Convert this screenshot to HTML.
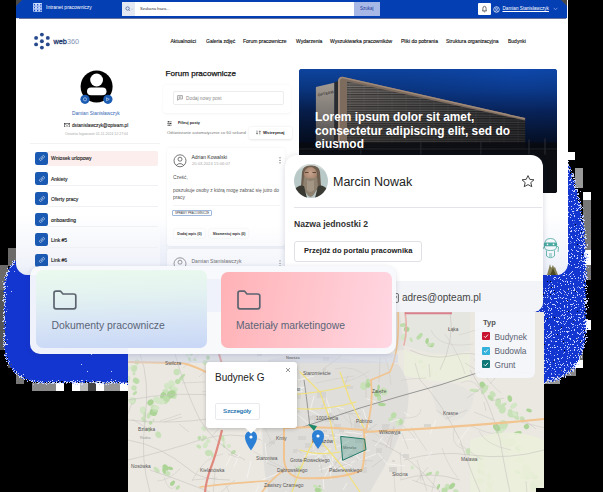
<!DOCTYPE html>
<html><head><meta charset="utf-8">
<style>
*{margin:0;padding:0;box-sizing:border-box}
html,body{width:603px;height:492px;overflow:hidden;background:#000;font-family:"Liberation Sans",sans-serif}
.a{position:absolute}
.t{position:absolute;white-space:nowrap;line-height:1}
</style></head><body>
<div class="a" style="left:0;top:0;width:603px;height:492px;overflow:hidden">

<!-- blue shadow -->
<svg class="a" style="left:0;top:0" width="603" height="492" viewBox="0 0 603 492">
  <defs>
    <filter id="dith" x="0" y="0" width="603" height="492" filterUnits="userSpaceOnUse" color-interpolation-filters="sRGB">
      <feGaussianBlur in="SourceAlpha" stdDeviation="2.8" result="bl"/>
      <feTurbulence type="fractalNoise" baseFrequency="1.3" numOctaves="1" seed="3" result="nz"/>
      <feColorMatrix in="nz" type="matrix" values="0 0 0 0 0  0 0 0 0 0  0 0 0 0 0  1.25 0 0 0 -0.15" result="na"/>
      <feComposite in="bl" in2="na" operator="arithmetic" k1="0" k2="40" k3="-40" k4="0" result="th"/>
      <feFlood flood-color="#1a3ed6" result="fl"/>
      <feComposite in="fl" in2="th" operator="in" result="blue"/>
      <feComposite in="bl" in2="na" operator="arithmetic" k1="0" k2="40" k3="-40" k4="-6" result="th2"/>
      <feFlood flood-color="#c8d4ff" result="wh"/>
      <feComposite in="wh" in2="th" operator="in" result="white"/>
      <feFlood flood-color="#1436d0"/>
      <feComposite in2="th2" operator="in" result="core"/>
      <feMerge><feMergeNode in="white"/><feMergeNode in="core"/></feMerge>
    </filter>
  </defs>
  <g fill="#6b6a68">
    <rect x="8" y="248" width="8" height="18"/><rect x="0" y="265" width="8" height="25"/>
    <rect x="0" y="290" width="5" height="60" fill="#555"/>
    <rect x="8" y="360" width="8" height="8" fill="#555"/><rect x="16" y="368" width="8" height="16" fill="#777"/>
    <rect x="32" y="383" width="24" height="8" fill="#8a8a8a"/><rect x="56" y="383" width="8" height="8" fill="#fff"/>
    <rect x="72" y="383" width="8" height="8" fill="#fff"/><rect x="80" y="383" width="8" height="8" fill="#bbb"/>
    <rect x="88" y="383" width="8" height="8" fill="#444"/><rect x="96" y="383" width="8" height="8" fill="#fff"/>
    <rect x="104" y="383" width="16" height="8" fill="#999"/><rect x="120" y="383" width="8" height="8" fill="#fff"/>
    <rect x="567" y="152" width="8" height="8" fill="#fff"/><rect x="575" y="168" width="8" height="20" fill="#9a9a9a"/>
    <rect x="583" y="192" width="8" height="8" fill="#fff"/><rect x="583" y="200" width="8" height="80" fill="#777"/>
    <rect x="583" y="250" width="8" height="15" fill="#fff"/><rect x="583" y="320" width="8" height="10" fill="#fff"/>
    <rect x="575" y="352" width="8" height="16" fill="#777"/><rect x="560" y="368" width="16" height="8" fill="#888"/>
    <rect x="544" y="376" width="16" height="8" fill="#999"/><rect x="575" y="360" width="8" height="8" fill="#fff"/>
  </g>
  <g filter="url(#dith)">
    <rect x="4" y="250" width="300" height="133" rx="36" fill="#000"/>
    <path d="M250 200 Q250 156 290 156 L566 156 Q586 200 587 260 L587 330 Q585 382 540 384 L290 382 Q250 382 250 340Z" fill="#000" fill-opacity="0.8"/><rect x="566" y="160" width="18" height="215" rx="8" fill="#fff" opacity="0"/>
  </g>
</svg>
<!-- page -->
<div class="a" id="page" style="left:16px;top:0;width:551.5px;height:275px;background:#fff;border-radius:0 0 12px 12px;overflow:hidden">
  <!-- top bar -->
  <div class="a" style="left:0;top:0;width:551px;height:17.5px;background:#0440b4;box-shadow:0 0.6px 0.8px rgba(0,20,90,0.6)"></div>
  <div class="a" style="left:0;top:215px;width:551px;height:60px;background:linear-gradient(180deg,rgba(225,230,245,0) 0%,rgba(220,226,243,0.45) 85%,rgba(212,220,240,0.6) 100%)"></div>
</div>

<!-- top bar content (absolute to body) -->
<svg class="a" style="left:32.8px;top:3.2px" width="9.4" height="8.8" viewBox="0 0 9.4 8.8">
  <rect x="0" y="0" width="9.4" height="8.8" rx="1" fill="#cfe0ff"/>
  <g fill="#0b3cc0"><circle cx="1.5" cy="1.8" r="0.75"/><circle cx="4.7" cy="1.8" r="0.75"/><circle cx="7.9" cy="1.8" r="0.75"/>
  <circle cx="1.5" cy="4.6" r="0.6"/><circle cx="4.7" cy="4.6" r="0.6"/><circle cx="7.9" cy="4.6" r="0.6"/>
  <circle cx="1.5" cy="7.5" r="0.75"/><circle cx="4.7" cy="7.5" r="0.75"/><circle cx="7.9" cy="7.5" r="0.75"/></g>
  <g stroke="#3a66d8" stroke-width="0.5"><path d="M0 3.2 H9.4 M0 6.1 H9.4"/></g>
</svg>
<div class="a" style="left:16px;top:0;width:0;height:0;border-top:6px solid #4a4846;border-right:6px solid transparent"></div>
<div class="a" style="left:561px;top:0;width:0;height:0;border-top:6px solid #4a4846;border-left:6px solid transparent"></div>
<div class="t" style="left:46px;top:5.25px;font-size:5px;color:#fff">Intranet pracowniczy</div>
<div class="a" style="left:122px;top:2px;width:232px;height:14px;background:#fff"></div>
<div class="a" style="left:122px;top:2px;width:13px;height:14px;background:#e3e8f3"></div>
<svg class="a" style="left:124.5px;top:6px" width="9" height="6" viewBox="0 0 9 6"><circle cx="2.6" cy="2.5" r="1.7" fill="none" stroke="#2c4a90" stroke-width="0.6"/><path d="M3.8 3.7 L5 4.9" stroke="#2c4a90" stroke-width="0.6"/><path d="M6.3 2.6 L7.1 3.4 L7.9 2.6" fill="none" stroke="#8090b0" stroke-width="0.4"/></svg>
<div class="t" style="left:140px;top:7.05px;font-size:4.1px;color:#333">Szukana fraza...</div>
<div class="a" style="left:354px;top:2px;width:26px;height:14px;background:#a8b8e6"></div>
<div class="t" style="left:360px;top:6.53px;font-size:4.5px;color:#1a3a9a">Szukaj</div>
<div class="a" style="left:478px;top:2.5px;width:12.5px;height:12.5px;background:#fff;border-radius:1px"></div>
<svg class="a" style="left:481px;top:4.8px" width="7" height="8" viewBox="0 0 7 8"><path d="M1.4 5.9 L1.9 5.2 L1.9 3.4 Q1.9 1.3 3.5 1.3 Q5.1 1.3 5.1 3.4 L5.1 5.2 L5.6 5.9 Z" fill="none" stroke="#222" stroke-width="0.65" stroke-linejoin="round"/><path d="M2.8 6.6 Q3.5 7.3 4.2 6.6" fill="none" stroke="#222" stroke-width="0.6"/></svg>
<svg class="a" style="left:493px;top:5.5px" width="7" height="7" viewBox="0 0 7 7"><circle cx="3.5" cy="3.5" r="2.8" fill="none" stroke="#fff" stroke-width="0.7"/><circle cx="3.5" cy="2.8" r="1" fill="none" stroke="#fff" stroke-width="0.6"/><path d="M1.8 5.5 Q3.5 3.8 5.2 5.5" fill="none" stroke="#fff" stroke-width="0.6"/></svg>
<div class="t" style="left:502.5px;top:7.14px;font-size:4.65px;color:#fff;text-decoration:underline">Damian Stanisławczyk</div>
<svg class="a" style="left:553px;top:7px" width="5" height="4" viewBox="0 0 5 4"><path d="M0.6 0.8 L2.5 2.8 L4.4 0.8" fill="none" stroke="#9fb3ee" stroke-width="0.7"/></svg>

<!-- logo -->
<svg class="a" style="left:33px;top:32px" width="18" height="18" viewBox="33 32 18 18">
  <g fill="#274a8e">
    <circle cx="41.9" cy="34.6" r="1.95"/><circle cx="41.9" cy="41.2" r="1.95"/><circle cx="41.9" cy="47.6" r="1.95"/>
    <circle cx="36.1" cy="37.9" r="1.95"/><circle cx="36.1" cy="44.4" r="1.95"/>
    <circle cx="47.8" cy="37.9" r="1.95"/><circle cx="47.8" cy="44.4" r="1.95"/>
  </g>
</svg>
<div class="t" style="left:53.5px;top:38px;font-size:7.3px;color:#223a6e"><span style="-webkit-text-stroke:0.3px #223a6e">web</span><span style="color:#8595b5">360</span></div>

<!-- nav -->
<div class="t" style="-webkit-text-stroke:0.12px #111;left:170.5px;top:38.95px;font-size:5px;color:#111">Aktualności</div>
<div class="t" style="-webkit-text-stroke:0.12px #111;left:206px;top:38.95px;font-size:5px;color:#111">Galeria zdjęć</div>
<div class="t" style="-webkit-text-stroke:0.12px #111;left:243px;top:38.95px;font-size:5px;color:#111">Forum pracownicze</div>
<div class="t" style="-webkit-text-stroke:0.12px #111;left:296px;top:38.95px;font-size:5px;color:#111">Wydarzenia</div>
<div class="t" style="-webkit-text-stroke:0.12px #111;left:330px;top:38.95px;font-size:5px;color:#111">Wyszukiwarka pracowników</div>
<div class="t" style="-webkit-text-stroke:0.12px #111;left:401px;top:38.95px;font-size:5px;color:#111">Pliki do pobrania</div>
<div class="t" style="-webkit-text-stroke:0.12px #111;left:446px;top:38.95px;font-size:5px;color:#111">Struktura organizacyjna</div>
<div class="t" style="-webkit-text-stroke:0.12px #111;left:508px;top:38.95px;font-size:5px;color:#111">Budynki</div>

<!-- profile -->
<svg class="a" style="left:78px;top:68px" width="38" height="40" viewBox="78 68 38 40">
  <circle cx="96.6" cy="86.5" r="16" fill="#000"/>
  <circle cx="96.6" cy="80" r="6.4" fill="#fff"/>
  <path d="M87 91.5 Q87 87.6 91 87.6 L102.5 87.6 Q106.5 87.6 106.5 91.5 Q106.5 95.2 102.5 95.2 L91 95.2 Q87 95.2 87 91.5Z" fill="#fff"/>
  <circle cx="85" cy="99.3" r="4.6" fill="#1c5db3"/>
  <circle cx="107.9" cy="99.3" r="4.6" fill="#1c5db3"/>
  <circle cx="85" cy="99.3" r="1.6" fill="none" stroke="#fff" stroke-width="0.5"/>
  <path d="M106.5 97.8 L109.3 99.3 L106.5 100.8Z" fill="none" stroke="#fff" stroke-width="0.5"/>
</svg>
<div class="t" style="left:72px;top:112.48px;font-size:4.77px;color:#3266b4">Damian Stanisławczyk</div>
<svg class="a" style="left:63.6px;top:122.8px" width="6.2" height="4.4" viewBox="0 0 6.2 4.4"><rect x="0.35" y="0.35" width="5.5" height="3.7" fill="none" stroke="#333" stroke-width="0.6"/><path d="M0.4 0.6 L3.1 2.6 L5.8 0.6" fill="none" stroke="#333" stroke-width="0.5"/></svg>
<div class="t" style="-webkit-text-stroke:0.1px #222;left:72px;top:124.43px;font-size:4.68px;color:#222">dstanislawczyk@opteam.pl</div>
<div class="t" style="left:65px;top:132.77px;font-size:3.5px;color:#aaa">Ostatnio logowanie 01-11-2024 12:27:04</div>
<div class="a" style="left:30px;top:142.5px;width:130px;height:1px;background:#f2f2f2"></div>

<!-- list -->
<div class="a" style="left:48px;top:151.0px;width:110px;height:15px;background:#fdeeee;border-radius:0 2px 2px 0"></div>
<div class="a" style="left:34.8px;top:151.5px;width:13.2px;height:13.2px;background:#1b5ab2;border-radius:2.2px"></div>
<svg class="a" style="left:37.5px;top:154.3px" width="8" height="8" viewBox="0 0 8 8"><path d="M3.4 4.6 L4.6 3.4 M2.9 3.6 L1.9 4.6 Q1 5.6 1.9 6.1 Q2.6 6.8 3.4 6.1 L4.4 5.1 M3.6 2.9 L4.6 1.9 Q5.5 1 6.1 1.9 Q6.8 2.6 6.1 3.4 L5.1 4.4" fill="none" stroke="#fff" stroke-width="0.55" stroke-linecap="round"/></svg>
<div class="t" style="-webkit-text-stroke:0.12px #222;left:51px;top:156.35px;font-size:5px;color:#111">Wniosek urlopowy</div>
<div class="a" style="left:48px;top:171.4px;width:110px;height:15px;background:transparent;border-bottom:0.6px solid #eff1f4"></div>
<div class="a" style="left:34.8px;top:171.9px;width:13.2px;height:13.2px;background:#1b5ab2;border-radius:2.2px"></div>
<svg class="a" style="left:37.5px;top:174.7px" width="8" height="8" viewBox="0 0 8 8"><path d="M3.4 4.6 L4.6 3.4 M2.9 3.6 L1.9 4.6 Q1 5.6 1.9 6.1 Q2.6 6.8 3.4 6.1 L4.4 5.1 M3.6 2.9 L4.6 1.9 Q5.5 1 6.1 1.9 Q6.8 2.6 6.1 3.4 L5.1 4.4" fill="none" stroke="#fff" stroke-width="0.55" stroke-linecap="round"/></svg>
<div class="t" style="-webkit-text-stroke:0.12px #222;left:51px;top:176.75px;font-size:5px;color:#111">Ankiety</div>
<div class="a" style="left:48px;top:191.8px;width:110px;height:15px;background:transparent;border-bottom:0.6px solid #eff1f4"></div>
<div class="a" style="left:34.8px;top:192.3px;width:13.2px;height:13.2px;background:#1b5ab2;border-radius:2.2px"></div>
<svg class="a" style="left:37.5px;top:195.1px" width="8" height="8" viewBox="0 0 8 8"><path d="M3.4 4.6 L4.6 3.4 M2.9 3.6 L1.9 4.6 Q1 5.6 1.9 6.1 Q2.6 6.8 3.4 6.1 L4.4 5.1 M3.6 2.9 L4.6 1.9 Q5.5 1 6.1 1.9 Q6.8 2.6 6.1 3.4 L5.1 4.4" fill="none" stroke="#fff" stroke-width="0.55" stroke-linecap="round"/></svg>
<div class="t" style="-webkit-text-stroke:0.12px #222;left:51px;top:197.15px;font-size:5px;color:#111">Oferty pracy</div>
<div class="a" style="left:48px;top:212.2px;width:110px;height:15px;background:transparent;border-bottom:0.6px solid #eff1f4"></div>
<div class="a" style="left:34.8px;top:212.7px;width:13.2px;height:13.2px;background:#1b5ab2;border-radius:2.2px"></div>
<svg class="a" style="left:37.5px;top:215.5px" width="8" height="8" viewBox="0 0 8 8"><path d="M3.4 4.6 L4.6 3.4 M2.9 3.6 L1.9 4.6 Q1 5.6 1.9 6.1 Q2.6 6.8 3.4 6.1 L4.4 5.1 M3.6 2.9 L4.6 1.9 Q5.5 1 6.1 1.9 Q6.8 2.6 6.1 3.4 L5.1 4.4" fill="none" stroke="#fff" stroke-width="0.55" stroke-linecap="round"/></svg>
<div class="t" style="-webkit-text-stroke:0.12px #222;left:51px;top:217.55px;font-size:5px;color:#111">onboarding</div>
<div class="a" style="left:48px;top:232.6px;width:110px;height:15px;background:transparent;border-bottom:0.6px solid #eff1f4"></div>
<div class="a" style="left:34.8px;top:233.1px;width:13.2px;height:13.2px;background:#1b5ab2;border-radius:2.2px"></div>
<svg class="a" style="left:37.5px;top:235.9px" width="8" height="8" viewBox="0 0 8 8"><path d="M3.4 4.6 L4.6 3.4 M2.9 3.6 L1.9 4.6 Q1 5.6 1.9 6.1 Q2.6 6.8 3.4 6.1 L4.4 5.1 M3.6 2.9 L4.6 1.9 Q5.5 1 6.1 1.9 Q6.8 2.6 6.1 3.4 L5.1 4.4" fill="none" stroke="#fff" stroke-width="0.55" stroke-linecap="round"/></svg>
<div class="t" style="-webkit-text-stroke:0.12px #222;left:51px;top:237.95px;font-size:5px;color:#111">Link #5</div>
<div class="a" style="left:48px;top:253.0px;width:110px;height:15px;background:transparent;border-bottom:0.6px solid #eff1f4"></div>
<div class="a" style="left:34.8px;top:253.5px;width:13.2px;height:13.2px;background:#1b5ab2;border-radius:2.2px"></div>
<svg class="a" style="left:37.5px;top:256.3px" width="8" height="8" viewBox="0 0 8 8"><path d="M3.4 4.6 L4.6 3.4 M2.9 3.6 L1.9 4.6 Q1 5.6 1.9 6.1 Q2.6 6.8 3.4 6.1 L4.4 5.1 M3.6 2.9 L4.6 1.9 Q5.5 1 6.1 1.9 Q6.8 2.6 6.1 3.4 L5.1 4.4" fill="none" stroke="#fff" stroke-width="0.55" stroke-linecap="round"/></svg>
<div class="t" style="-webkit-text-stroke:0.12px #222;left:51px;top:258.35px;font-size:5px;color:#111">Link #6</div>

<!-- forum -->
<div class="t" style="-webkit-text-stroke:0.25px #111;left:165.5px;top:70.35px;font-size:8.1px;color:#111">Forum pracownicze</div>
<div class="a" style="left:163px;top:84.6px;width:128px;height:28px;background:#fff;border-radius:3px;box-shadow:0 0.5px 3px rgba(0,0,0,0.05)"></div>
<div class="a" style="left:173px;top:91.3px;width:111px;height:13.5px;background:#fff;border:0.6px solid #ececef;border-radius:2px"></div>
<svg class="a" style="left:176.5px;top:95px" width="6" height="6" viewBox="0 0 6 6"><path d="M0.6 5.3 L0.6 0.6 L5.4 0.6 L5.4 4 L1.8 4 Z M1.8 2 L4.2 2 M1.8 2.9 L3.4 2.9" fill="none" stroke="#555" stroke-width="0.5"/></svg>
<div class="t" style="left:186px;top:96.66px;font-size:4.8px;color:#8a8a8a">Dodaj nowy post</div>
<svg class="a" style="left:166.5px;top:121px" width="5" height="5" viewBox="0 0 5 5"><path d="M0.3 0.8 H4.7 M0.3 2.5 H4.7 M0.3 4.2 H4.7" stroke="#333" stroke-width="0.6"/><rect x="1" y="0.3" width="1" height="1" fill="#333"/><rect x="3" y="2" width="1" height="1" fill="#333"/><rect x="1.6" y="3.7" width="1" height="1" fill="#333"/></svg>
<div class="t" style="left:178px;top:121.88px;font-size:3.85px;color:#222;font-weight:bold">Filtruj posty</div>
<div class="t" style="left:167px;top:131.37px;font-size:4.24px;color:#777">Odświeżanie automatycznie co 60 sekund</div>
<div class="a" style="left:248.5px;top:126.5px;width:43px;height:12px;background:#fff;border-radius:2px;box-shadow:0 0.5px 2.5px rgba(0,0,0,0.1)"></div>
<svg class="a" style="left:255.5px;top:130px" width="5" height="5" viewBox="0 0 5 5"><path d="M1 0.5 V4 M0.2 3.2 L1 4.2 L1.8 3.2 M3.8 4.5 V1 M3 1.8 L3.8 0.8 L4.6 1.8" fill="none" stroke="#333" stroke-width="0.5"/></svg>
<div class="t" style="left:263px;top:131.13px;font-size:4.3px;color:#222;font-weight:bold">Wstrzymaj</div>

<!-- post card -->
<div class="a" style="left:167px;top:148px;width:118px;height:98px;background:#fff;border-radius:3px;box-shadow:0 0.5px 3px rgba(0,0,0,0.06)"></div>
<svg class="a" style="left:172px;top:153px" width="16" height="16" viewBox="0 0 16 16"><circle cx="8" cy="7.8" r="6" fill="none" stroke="#555" stroke-width="0.8"/><circle cx="8" cy="6.2" r="2" fill="none" stroke="#555" stroke-width="0.8"/><path d="M4.3 12.3 Q8 8.8 11.7 12.3" fill="none" stroke="#555" stroke-width="0.8"/></svg>
<div class="t" style="left:191.5px;top:154.95px;font-size:5px;color:#333">Adrian Kowalski</div>
<div class="t" style="left:192px;top:162.22px;font-size:4.15px;color:#aaa">20.03.2024 15:06:07</div>
<svg class="a" style="left:279px;top:156.5px" width="2" height="7" viewBox="0 0 2 7"><circle cx="1" cy="0.8" r="0.6" fill="#444"/><circle cx="1" cy="3.3" r="0.6" fill="#444"/><circle cx="1" cy="5.8" r="0.6" fill="#444"/></svg>
<div class="t" style="left:173px;top:176.44px;font-size:4.83px;color:#555">Cześć,</div>
<div class="t" style="left:173px;top:188.74px;font-size:4.83px;color:#555">poszukuje osoby z którą mogę zabrać się jutro do</div>
<div class="t" style="left:173px;top:196.14px;font-size:4.83px;color:#555">pracy</div>
<div class="a" style="left:172.5px;top:204.5px;width:107px;height:0.6px;background:#f4f4f6"></div>
<div class="a" style="left:172.3px;top:209.8px;width:39.7px;height:5.8px;background:#fff;border:0.6px solid #9fb8dc;border-radius:1px"></div>
<div class="t" style="left:175px;top:212.04px;font-size:2.83px;color:#333">SPRAWY PRACOWNICZE</div>
<div class="a" style="left:173.7px;top:228.8px;width:31.6px;height:9.4px;background:#fff;border-radius:1.5px;box-shadow:0 0 2px rgba(0,0,0,0.1)"></div>
<div class="t" style="left:177.3px;top:232.92px;font-size:3.6px;color:#222;font-weight:bold">Dodaj wpis (0)</div>
<div class="a" style="left:209.4px;top:228.8px;width:38.4px;height:9.4px;background:#fff;border-radius:1.5px;box-shadow:0 0 2px rgba(0,0,0,0.1)"></div>
<div class="t" style="left:212.8px;top:232.92px;font-size:3.6px;color:#222;font-weight:bold">Skomentuj wpis (0)</div>
<div class="a" style="left:167px;top:249px;width:118px;height:30px;background:#fff;border-radius:3px;box-shadow:0 0.5px 3px rgba(0,0,0,0.06)"></div>
<svg class="a" style="left:172px;top:256px" width="16" height="16" viewBox="0 0 16 16"><circle cx="8" cy="7.8" r="6" fill="none" stroke="#555" stroke-width="0.8"/><circle cx="8" cy="6.2" r="2" fill="none" stroke="#555" stroke-width="0.8"/><path d="M4.3 12.3 Q8 8.8 11.7 12.3" fill="none" stroke="#555" stroke-width="0.8"/></svg>
<div class="t" style="left:191.5px;top:258.75px;font-size:5px;color:#333">Damian Stanisławczyk</div>
<svg class="a" style="left:279px;top:260px" width="2" height="7" viewBox="0 0 2 7"><circle cx="1" cy="0.8" r="0.6" fill="#444"/><circle cx="1" cy="3.3" r="0.6" fill="#444"/><circle cx="1" cy="5.8" r="0.6" fill="#444"/></svg>

<div class="a" style="left:160px;top:225px;width:126px;height:50px;background:linear-gradient(180deg,rgba(225,230,245,0) 0%,rgba(220,226,243,0.35) 85%,rgba(212,220,240,0.5) 100%)"></div>
<!-- hero -->
<div class="a" id="hero" style="left:298.5px;top:68.5px;width:258px;height:124px;border-radius:3px;overflow:hidden;background:#0a2a6e">
<svg class="a" style="left:0;top:0" width="258" height="124" viewBox="298.5 68.5 258 124">
  <defs>
    <linearGradient id="sky" x1="0" y1="0" x2="0" y2="1">
      <stop offset="0" stop-color="#0d449e"/>
      <stop offset="0.17" stop-color="#0a347c"/>
      <stop offset="0.34" stop-color="#071d4a"/>
      <stop offset="0.5" stop-color="#05122c"/>
      <stop offset="0.62" stop-color="#040b1a"/>
      <stop offset="1" stop-color="#04060a"/>
    </linearGradient>
    <radialGradient id="skyR" cx="0.85" cy="0" r="0.75" gradientTransform="translate(0.85 0) scale(1 0.9) translate(-0.85 0)">
      <stop offset="0" stop-color="#1252cc" stop-opacity="0.3"/>
      <stop offset="0.6" stop-color="#0c3a98" stop-opacity="0.15"/>
      <stop offset="1" stop-color="#0a3590" stop-opacity="0"/>
    </radialGradient>
    <linearGradient id="tower" x1="0" y1="0" x2="0" y2="1">
      <stop offset="0" stop-color="#a39b93"/>
      <stop offset="0.45" stop-color="#7c7772"/>
      <stop offset="1" stop-color="#2e2f33"/>
    </linearGradient>
    <linearGradient id="fac" x1="0" y1="0" x2="1" y2="0">
      <stop offset="0" stop-color="#6e6a66"/>
      <stop offset="1" stop-color="#3a3b40"/>
    </linearGradient>
    <linearGradient id="facV" x1="0" y1="0" x2="0" y2="1">
      <stop offset="0" stop-color="#000" stop-opacity="0"/>
      <stop offset="1" stop-color="#000" stop-opacity="0.45"/>
    </linearGradient>
    <pattern id="slats" width="14" height="2.4" patternUnits="userSpaceOnUse">
      <rect width="14" height="1.1" fill="#000" opacity="0.4"/><rect y="1.6" width="14" height="0.5" fill="#aaa" opacity="0.15"/><rect x="13" width="1" height="2.4" fill="#999" opacity="0.12"/>
    </pattern>
  </defs>
  <rect x="298.5" y="68.5" width="258" height="124" fill="url(#sky)"/>
  <rect x="298.5" y="68.5" width="258" height="124" fill="url(#skyR)"/>
  <!-- main facade -->
  <path d="M346 80.5 L524.6 119.5 L524.6 150 L346 150 Z" fill="url(#fac)"/>
  <path d="M346 80.5 L524.6 119.5 L524.6 150 L346 150 Z" fill="url(#slats)"/>
  <path d="M346 80.5 L524.6 119.5 L524.6 150 L346 150 Z" fill="url(#facV)"/>
  <path d="M337.5 80 Q338 76.5 342 76.3 L524.6 117.5 L524.6 120 L346.5 81 L346.5 150 L337.5 150 Z" fill="#7d6b5e"/>
  <path d="M337.5 80 Q338 76.5 342 76.3 L524.6 117.5 L524.6 118.8 L342 77.8 Q339.5 78 339.5 81 L339.5 150 L337.5 150Z" fill="#a08a7a"/>
  <path d="M333.7 82 L337.5 80.5 L337.5 150 L333.7 150 Z" fill="#2a2b2f"/>
  <!-- left tower -->
  <path d="M315.4 86.5 L333.7 82.3 L333.7 152 L315.4 152 Z" fill="url(#tower)"/>
  <text x="317.5" y="96" font-size="3.8" fill="#4a4440" transform="rotate(-12 317.5 96)" font-family="Liberation Sans" font-weight="bold">OPTEAM</text>
  <!-- ground -->
  <rect x="298.5" y="142" width="258" height="51" fill="#090b10" opacity="0.85"/>
  <rect x="298.5" y="150" width="258" height="43" fill="#0b0d12"/>
  <g fill="#3a3d44" opacity="0.7"><rect x="360" y="142" width="0.8" height="12"/><rect x="420" y="142" width="0.8" height="12"/><rect x="480" y="141" width="0.8" height="13"/><rect x="528" y="139" width="1" height="15"/><rect x="544" y="138" width="1" height="16"/></g>
  <rect x="298.5" y="148" width="258" height="1" fill="#2a2c33" opacity="0.7"/>
</svg>
<div class="t" style="left:16.5px;top:42.5px;font-size:11.9px;line-height:13.5px;color:#fff;font-weight:bold;white-space:normal;width:250px">Lorem ipsum dolor sit amet,<br>consectetur adipiscing elit, sed do<br>eiusmod</div>
</div>

<!-- robot icon -->
<svg class="a" style="left:541px;top:237px" width="20" height="26" viewBox="0 0 20 26"><g fill="none" stroke="#4aa9a0" stroke-width="0.8">
<path d="M3.5 8 Q3.5 1.5 9.5 1.5 Q15.5 1.5 15.5 8 L15.5 10 Q15.5 13.5 9.5 13.5 Q3.5 13.5 3.5 10 Z"/>
<path d="M5.5 13.5 L5.5 19 Q9.5 22.5 13.5 19 L13.5 13.5"/>
<path d="M15.5 9 L17.5 10 L17 15 M3.5 9 L2 12"/>
<path d="M8 17 h3 M8 19 h3"/></g>
<rect x="2.8" y="5.6" width="13.4" height="3.6" rx="1.8" fill="#4aa9a0"/>
<circle cx="6.5" cy="7.4" r="0.8" fill="#fff"/><circle cx="12.5" cy="7.4" r="0.8" fill="#fff"/>
</svg>
<!-- grass bit -->
<svg class="a" style="left:544px;top:262px" width="18" height="13" viewBox="0 0 18 13"><path d="M3 13 Q5 6 6 2 Q7 7 8 5 Q9 1 10 6 Q11 3 12 8 Q13 10 14 13Z" fill="#6e6a3a" opacity="0.85"/><path d="M6 13 Q8 9 9 6 Q10 9 12 13Z" fill="#4a4a22"/></svg>

<!-- Marcin card -->
<div class="a" id="mcard" style="left:285px;top:154.8px;width:257.5px;height:157.5px;background:#fff;border-radius:12px 12px 10px 10px;box-shadow:0 1px 6px rgba(40,50,90,0.18);overflow:hidden">
  <div class="a" style="left:0;top:126px;width:258px;height:32px;background:#f3f4f8"></div>
</div>
<svg class="a" style="left:294px;top:163.5px" width="34" height="34" viewBox="0 0 34 34">
  <defs><clipPath id="avc"><circle cx="17" cy="17" r="17"/></clipPath>
  <radialGradient id="fc" cx="0.5" cy="0.4" r="0.6"><stop offset="0" stop-color="#c9a48e"/><stop offset="1" stop-color="#9c7c66"/></radialGradient></defs>
  <g clip-path="url(#avc)">
    <rect width="34" height="34" fill="#b9c9c8"/>
    <path d="M0 0 H34 V10 Q26 2 17 2 Q8 2 0 10Z" fill="#d6dcd8"/>
    <path d="M8 8 Q9 1 17 1.5 Q25 1 26 8 L27 22 Q22 28 17 28 Q12 28 7 22 Z" fill="#6e5e50"/>
    <ellipse cx="16.5" cy="10.5" rx="6.5" ry="7.5" fill="url(#fc)"/>
    <path d="M11 8.5 h3.5 M18.5 8.5 h3.5" stroke="#5a4438" stroke-width="1.2"/>
    <path d="M10 13 Q17 16 23 13 L24 22 Q20 33 16.5 33 Q13 33 9 22Z" fill="#8e8170"/>
    <path d="M13 16 Q16.5 18 20 16 L20 26 Q16.5 30 13 26Z" fill="#a39684"/>
    <path d="M0 26 Q5 20 10 22 L13 34 H0Z" fill="#393932"/>
    <path d="M34 26 Q29 20 24 22 L21 34 H34Z" fill="#3b3a33"/>
  </g>
</svg>
<div class="t" style="left:333px;top:175.62px;font-size:12.5px;color:#222">Marcin Nowak</div>
<svg class="a" style="left:520px;top:174px" width="16" height="14" viewBox="0 0 16 14"><path d="M8 1.6 L9.8 5.4 L14 5.8 L10.8 8.6 L11.8 12.7 L8 10.6 L4.2 12.7 L5.2 8.6 L2 5.8 L6.2 5.4 Z" fill="none" stroke="#444" stroke-width="1" stroke-linejoin="round"/></svg>
<div class="a" style="left:294px;top:206.8px;width:248px;height:0.7px;background:#e4e4e8"></div>
<div class="t" style="left:294px;top:219.57px;font-size:8.6px;color:#333;font-weight:bold">Nazwa jednostki 2</div>
<div class="a" style="left:294px;top:240.5px;width:128px;height:21px;background:#fff;border:0.7px solid #dfe1e6;border-radius:3px"></div>
<div class="t" style="left:304px;top:246.88px;font-size:7.5px;color:#222;font-weight:bold">Przejdź do portalu pracownika</div>
<svg class="a" style="left:391px;top:293px" width="8" height="10" viewBox="0 0 8 10"><rect x="0.6" y="0.6" width="6.8" height="8.8" rx="1" fill="none" stroke="#555" stroke-width="0.9"/><circle cx="4" cy="4" r="1.4" fill="none" stroke="#555" stroke-width="0.8"/></svg>
<div class="t" style="left:402px;top:292.90px;font-size:10px;color:#444">adres@opteam.pl</div>

<!-- map -->
<div class="a" style="left:128px;top:312px;width:416px;height:180px;overflow:hidden;background:#ebe8e2">
<svg class="a" style="left:0;top:0" width="416" height="180" viewBox="128 312 416 180">
  <!-- urban grey areas -->
  <path d="M268 360 Q300 352 340 358 L398 364 Q415 385 405 420 Q395 450 378 478 L370 492 L268 492 Q258 440 266 400Z" fill="#e0deda"/>
  <path d="M300 312 L400 312 L404 350 L300 356Z" fill="#e3e1dd"/>
  <path d="M432 385 Q458 378 474 395 Q472 418 450 422 Q432 414 432 385Z" fill="#e6e4df"/>
  <path d="M128 312 L200 312 L200 354 L128 354Z" fill="#e6e4df"/>
  <path d="M404 312 L470 312 L470 350 Q440 360 404 345Z" fill="#e6e6e0"/>
  <!-- green patches -->
<g>
<ellipse cx="173.4" cy="391.7" rx="2.0" ry="2.8" transform="rotate(66 173.4 391.7)" fill="#c8e1b8"/>
<ellipse cx="148.7" cy="415.5" rx="3.1" ry="2.0" transform="rotate(99 148.7 415.5)" fill="#c8e1b8"/>
<ellipse cx="153.5" cy="412.1" rx="3.8" ry="3.9" transform="rotate(104 153.5 412.1)" fill="#acd497"/>
<ellipse cx="181.1" cy="379.4" rx="2.2" ry="2.5" transform="rotate(97 181.1 379.4)" fill="#d3e6c6"/>
<ellipse cx="171.6" cy="383.9" rx="3.6" ry="3.1" transform="rotate(67 171.6 383.9)" fill="#d3e6c6"/>
<ellipse cx="150.5" cy="402.5" rx="3.4" ry="2.8" transform="rotate(140 150.5 402.5)" fill="#acd497"/>
<ellipse cx="157.1" cy="399.9" rx="4.3" ry="3.2" transform="rotate(44 157.1 399.9)" fill="#d3e6c6"/>
<ellipse cx="167.2" cy="385.9" rx="3.2" ry="3.0" transform="rotate(13 167.2 385.9)" fill="#d3e6c6"/>
<ellipse cx="166.6" cy="388.9" rx="3.3" ry="1.5" transform="rotate(120 166.6 388.9)" fill="#d3e6c6"/>
<ellipse cx="163.3" cy="395.9" rx="4.0" ry="3.0" transform="rotate(104 163.3 395.9)" fill="#acd497"/>
<ellipse cx="182.1" cy="376.9" rx="4.0" ry="1.5" transform="rotate(132 182.1 376.9)" fill="#bcdcaa"/>
<ellipse cx="165.6" cy="401.4" rx="2.7" ry="2.4" transform="rotate(120 165.6 401.4)" fill="#c8e1b8"/>
<ellipse cx="143.8" cy="419.7" rx="3.4" ry="1.9" transform="rotate(52 143.8 419.7)" fill="#c8e1b8"/>
<ellipse cx="171.4" cy="387.9" rx="2.3" ry="2.4" transform="rotate(50 171.4 387.9)" fill="#c8e1b8"/>
<ellipse cx="153.8" cy="407.2" rx="3.1" ry="2.3" transform="rotate(159 153.8 407.2)" fill="#c8e1b8"/>
<ellipse cx="177.7" cy="381.6" rx="2.5" ry="2.7" transform="rotate(106 177.7 381.6)" fill="#bcdcaa"/>
<ellipse cx="174.6" cy="388.9" rx="3.7" ry="2.2" transform="rotate(23 174.6 388.9)" fill="#d3e6c6"/>
<ellipse cx="143.1" cy="410.2" rx="3.2" ry="3.7" transform="rotate(171 143.1 410.2)" fill="#d3e6c6"/>
<ellipse cx="166.0" cy="391.2" rx="3.8" ry="1.5" transform="rotate(12 166.0 391.2)" fill="#c8e1b8"/>
<ellipse cx="169.9" cy="395.8" rx="2.1" ry="2.9" transform="rotate(97 169.9 395.8)" fill="#bcdcaa"/>
<ellipse cx="161.8" cy="401.4" rx="3.0" ry="3.1" transform="rotate(172 161.8 401.4)" fill="#d3e6c6"/>
<ellipse cx="174.2" cy="394.2" rx="4.9" ry="2.6" transform="rotate(87 174.2 394.2)" fill="#c8e1b8"/>
<ellipse cx="176.7" cy="372.0" rx="3.3" ry="3.2" transform="rotate(93 176.7 372.0)" fill="#c8e1b8"/>
<ellipse cx="144.6" cy="415.3" rx="3.5" ry="1.4" transform="rotate(95 144.6 415.3)" fill="#c8e1b8"/>
<ellipse cx="156.0" cy="407.9" rx="2.3" ry="3.4" transform="rotate(96 156.0 407.9)" fill="#d3e6c6"/>
<ellipse cx="171.0" cy="394.5" rx="4.9" ry="3.7" transform="rotate(145 171.0 394.5)" fill="#acd497"/>
<ellipse cx="155.3" cy="410.9" rx="2.9" ry="1.4" transform="rotate(5 155.3 410.9)" fill="#bcdcaa"/>
<ellipse cx="166.4" cy="398.9" rx="2.9" ry="3.5" transform="rotate(130 166.4 398.9)" fill="#bcdcaa"/>
<ellipse cx="132.4" cy="401.8" rx="2.0" ry="1.5" transform="rotate(37 132.4 401.8)" fill="#d3e6c6"/>
<ellipse cx="133.8" cy="401.3" rx="3.6" ry="1.8" transform="rotate(116 133.8 401.3)" fill="#c8e1b8"/>
<ellipse cx="134.9" cy="393.1" rx="2.6" ry="1.4" transform="rotate(142 134.9 393.1)" fill="#bcdcaa"/>
<ellipse cx="136.9" cy="362.0" rx="2.5" ry="2.6" transform="rotate(15 136.9 362.0)" fill="#c8e1b8"/>
<ellipse cx="133.6" cy="368.4" rx="3.6" ry="2.7" transform="rotate(26 133.6 368.4)" fill="#d3e6c6"/>
<ellipse cx="132.4" cy="398.7" rx="2.7" ry="1.3" transform="rotate(3 132.4 398.7)" fill="#c8e1b8"/>
<ellipse cx="136.1" cy="380.8" rx="3.5" ry="2.8" transform="rotate(38 136.1 380.8)" fill="#bcdcaa"/>
<ellipse cx="127.1" cy="368.9" rx="2.2" ry="2.2" transform="rotate(150 127.1 368.9)" fill="#c8e1b8"/>
<ellipse cx="131.7" cy="401.0" rx="2.8" ry="2.9" transform="rotate(76 131.7 401.0)" fill="#d3e6c6"/>
<ellipse cx="134.4" cy="368.6" rx="3.5" ry="2.7" transform="rotate(110 134.4 368.6)" fill="#c8e1b8"/>
<ellipse cx="127.4" cy="368.1" rx="2.8" ry="1.7" transform="rotate(93 127.4 368.1)" fill="#d3e6c6"/>
<ellipse cx="134.0" cy="373.8" rx="1.5" ry="1.5" transform="rotate(8 134.0 373.8)" fill="#c8e1b8"/>
<ellipse cx="128.1" cy="379.3" rx="3.6" ry="2.0" transform="rotate(110 128.1 379.3)" fill="#d3e6c6"/>
<ellipse cx="134.0" cy="387.9" rx="2.6" ry="2.7" transform="rotate(91 134.0 387.9)" fill="#c8e1b8"/>
<ellipse cx="208.0" cy="357.7" rx="2.0" ry="2.2" transform="rotate(170 208.0 357.7)" fill="#acd497"/>
<ellipse cx="194.9" cy="359.7" rx="1.6" ry="1.6" transform="rotate(13 194.9 359.7)" fill="#bcdcaa"/>
<ellipse cx="205.6" cy="362.7" rx="3.2" ry="2.4" transform="rotate(26 205.6 362.7)" fill="#c8e1b8"/>
<ellipse cx="208.9" cy="373.3" rx="2.4" ry="2.1" transform="rotate(178 208.9 373.3)" fill="#c8e1b8"/>
<ellipse cx="189.5" cy="359.2" rx="2.2" ry="1.5" transform="rotate(57 189.5 359.2)" fill="#bcdcaa"/>
<ellipse cx="187.2" cy="355.1" rx="1.4" ry="1.7" transform="rotate(112 187.2 355.1)" fill="#d3e6c6"/>
<ellipse cx="212.6" cy="370.2" rx="2.0" ry="2.9" transform="rotate(15 212.6 370.2)" fill="#bcdcaa"/>
<ellipse cx="191.2" cy="353.9" rx="1.7" ry="1.9" transform="rotate(164 191.2 353.9)" fill="#bcdcaa"/>
<ellipse cx="148.9" cy="429.8" rx="2.2" ry="1.5" transform="rotate(50 148.9 429.8)" fill="#c8e1b8"/>
<ellipse cx="158.0" cy="433.6" rx="2.5" ry="2.3" transform="rotate(15 158.0 433.6)" fill="#c8e1b8"/>
<ellipse cx="150.6" cy="422.8" rx="1.9" ry="1.9" transform="rotate(167 150.6 422.8)" fill="#bcdcaa"/>
<ellipse cx="158.3" cy="435.1" rx="3.2" ry="2.6" transform="rotate(47 158.3 435.1)" fill="#c8e1b8"/>
<ellipse cx="149.1" cy="429.4" rx="2.8" ry="1.4" transform="rotate(90 149.1 429.4)" fill="#c8e1b8"/>
<ellipse cx="153.6" cy="420.1" rx="1.3" ry="0.9" transform="rotate(91 153.6 420.1)" fill="#c8e1b8"/>
<ellipse cx="205.3" cy="445.3" rx="3.0" ry="2.4" transform="rotate(118 205.3 445.3)" fill="#d3e6c6"/>
<ellipse cx="208.1" cy="452.9" rx="3.1" ry="3.1" transform="rotate(62 208.1 452.9)" fill="#c8e1b8"/>
<ellipse cx="202.7" cy="439.8" rx="1.7" ry="1.2" transform="rotate(133 202.7 439.8)" fill="#bcdcaa"/>
<ellipse cx="208.1" cy="441.2" rx="2.3" ry="2.1" transform="rotate(175 208.1 441.2)" fill="#d3e6c6"/>
<ellipse cx="199.4" cy="437.9" rx="1.8" ry="2.0" transform="rotate(47 199.4 437.9)" fill="#bcdcaa"/>
<ellipse cx="211.3" cy="453.6" rx="3.8" ry="1.7" transform="rotate(64 211.3 453.6)" fill="#c8e1b8"/>
<ellipse cx="204.2" cy="438.3" rx="3.0" ry="1.6" transform="rotate(140 204.2 438.3)" fill="#c8e1b8"/>
<ellipse cx="203.4" cy="436.8" rx="1.5" ry="1.1" transform="rotate(55 203.4 436.8)" fill="#c8e1b8"/>
<ellipse cx="203.5" cy="428.7" rx="1.8" ry="2.9" transform="rotate(141 203.5 428.7)" fill="#d3e6c6"/>
<ellipse cx="198.8" cy="446.6" rx="1.8" ry="2.6" transform="rotate(116 198.8 446.6)" fill="#c8e1b8"/>
<ellipse cx="228.8" cy="446.0" rx="2.1" ry="2.2" transform="rotate(91 228.8 446.0)" fill="#d3e6c6"/>
<ellipse cx="224.0" cy="446.0" rx="1.2" ry="2.1" transform="rotate(144 224.0 446.0)" fill="#c8e1b8"/>
<ellipse cx="222.9" cy="438.4" rx="3.2" ry="1.6" transform="rotate(81 222.9 438.4)" fill="#c8e1b8"/>
<ellipse cx="223.9" cy="443.1" rx="2.2" ry="0.9" transform="rotate(144 223.9 443.1)" fill="#d3e6c6"/>
<ellipse cx="233.3" cy="452.2" rx="2.8" ry="1.8" transform="rotate(146 233.3 452.2)" fill="#bcdcaa"/>
<ellipse cx="221.4" cy="437.8" rx="2.6" ry="1.7" transform="rotate(152 221.4 437.8)" fill="#c8e1b8"/>
<ellipse cx="167.5" cy="473.6" rx="2.9" ry="2.4" transform="rotate(14 167.5 473.6)" fill="#c8e1b8"/>
<ellipse cx="164.5" cy="471.4" rx="2.9" ry="1.3" transform="rotate(87 164.5 471.4)" fill="#acd497"/>
<ellipse cx="164.0" cy="469.6" rx="3.1" ry="1.7" transform="rotate(93 164.0 469.6)" fill="#acd497"/>
<ellipse cx="170.5" cy="468.3" rx="2.7" ry="1.7" transform="rotate(15 170.5 468.3)" fill="#acd497"/>
<ellipse cx="156.6" cy="469.9" rx="3.8" ry="2.0" transform="rotate(48 156.6 469.9)" fill="#c8e1b8"/>
<ellipse cx="177.8" cy="487.6" rx="1.6" ry="2.6" transform="rotate(47 177.8 487.6)" fill="#bcdcaa"/>
<ellipse cx="165.7" cy="467.5" rx="3.6" ry="2.5" transform="rotate(42 165.7 467.5)" fill="#acd497"/>
<ellipse cx="172.5" cy="483.2" rx="3.1" ry="1.9" transform="rotate(131 172.5 483.2)" fill="#acd497"/>
<ellipse cx="411.2" cy="339.7" rx="1.4" ry="2.6" transform="rotate(151 411.2 339.7)" fill="#c8e1b8"/>
<ellipse cx="430.5" cy="345.4" rx="3.2" ry="1.6" transform="rotate(12 430.5 345.4)" fill="#acd497"/>
<ellipse cx="429.4" cy="344.4" rx="2.4" ry="1.6" transform="rotate(9 429.4 344.4)" fill="#c8e1b8"/>
<ellipse cx="403.1" cy="325.1" rx="1.8" ry="3.1" transform="rotate(79 403.1 325.1)" fill="#bcdcaa"/>
<ellipse cx="403.8" cy="337.0" rx="3.6" ry="2.8" transform="rotate(114 403.8 337.0)" fill="#d3e6c6"/>
<ellipse cx="419.2" cy="336.9" rx="3.2" ry="2.0" transform="rotate(135 419.2 336.9)" fill="#bcdcaa"/>
<ellipse cx="421.0" cy="334.6" rx="1.8" ry="1.9" transform="rotate(51 421.0 334.6)" fill="#bcdcaa"/>
<ellipse cx="427.1" cy="340.9" rx="3.0" ry="1.7" transform="rotate(100 427.1 340.9)" fill="#acd497"/>
<ellipse cx="406.6" cy="329.2" rx="2.6" ry="2.8" transform="rotate(99 406.6 329.2)" fill="#acd497"/>
<ellipse cx="432.8" cy="344.2" rx="1.7" ry="1.5" transform="rotate(16 432.8 344.2)" fill="#bcdcaa"/>
<ellipse cx="381.9" cy="404.5" rx="3.9" ry="1.7" transform="rotate(4 381.9 404.5)" fill="#acd497"/>
<ellipse cx="377.6" cy="391.6" rx="2.4" ry="3.0" transform="rotate(90 377.6 391.6)" fill="#d3e6c6"/>
<ellipse cx="399.9" cy="421.7" rx="3.4" ry="3.3" transform="rotate(39 399.9 421.7)" fill="#bcdcaa"/>
<ellipse cx="390.7" cy="419.1" rx="2.8" ry="1.9" transform="rotate(147 390.7 419.1)" fill="#c8e1b8"/>
<ellipse cx="363.7" cy="386.1" rx="3.9" ry="3.5" transform="rotate(88 363.7 386.1)" fill="#c8e1b8"/>
<ellipse cx="383.9" cy="391.5" rx="4.0" ry="3.5" transform="rotate(45 383.9 391.5)" fill="#c8e1b8"/>
<ellipse cx="377.9" cy="395.3" rx="1.9" ry="3.2" transform="rotate(126 377.9 395.3)" fill="#acd497"/>
<ellipse cx="367.8" cy="381.4" rx="2.0" ry="2.6" transform="rotate(7 367.8 381.4)" fill="#bcdcaa"/>
<ellipse cx="393.7" cy="415.3" rx="2.8" ry="3.0" transform="rotate(18 393.7 415.3)" fill="#bcdcaa"/>
<ellipse cx="379.2" cy="398.3" rx="2.2" ry="2.6" transform="rotate(2 379.2 398.3)" fill="#bcdcaa"/>
<ellipse cx="397.3" cy="422.9" rx="4.0" ry="1.8" transform="rotate(95 397.3 422.9)" fill="#d3e6c6"/>
<ellipse cx="378.6" cy="387.0" rx="2.5" ry="1.3" transform="rotate(90 378.6 387.0)" fill="#acd497"/>
<ellipse cx="368.2" cy="385.2" rx="2.6" ry="2.4" transform="rotate(125 368.2 385.2)" fill="#acd497"/>
<ellipse cx="376.6" cy="393.5" rx="2.4" ry="3.2" transform="rotate(12 376.6 393.5)" fill="#acd497"/>
<ellipse cx="317.5" cy="494.0" rx="1.7" ry="1.3" transform="rotate(137 317.5 494.0)" fill="#bcdcaa"/>
<ellipse cx="299.5" cy="467.8" rx="3.1" ry="1.8" transform="rotate(164 299.5 467.8)" fill="#c8e1b8"/>
<ellipse cx="320.6" cy="491.0" rx="1.6" ry="2.7" transform="rotate(26 320.6 491.0)" fill="#c8e1b8"/>
<ellipse cx="315.4" cy="486.3" rx="2.7" ry="1.5" transform="rotate(20 315.4 486.3)" fill="#c8e1b8"/>
<ellipse cx="317.8" cy="490.0" rx="3.2" ry="2.2" transform="rotate(6 317.8 490.0)" fill="#acd497"/>
<ellipse cx="319.7" cy="486.2" rx="1.4" ry="1.0" transform="rotate(15 319.7 486.2)" fill="#acd497"/>
<ellipse cx="526.5" cy="426.6" rx="2.7" ry="2.6" transform="rotate(148 526.5 426.6)" fill="#acd497"/>
<ellipse cx="482.7" cy="385.2" rx="3.9" ry="2.8" transform="rotate(58 482.7 385.2)" fill="#acd497"/>
<ellipse cx="474.2" cy="390.4" rx="4.7" ry="1.6" transform="rotate(6 474.2 390.4)" fill="#c8e1b8"/>
<ellipse cx="514.9" cy="414.2" rx="2.2" ry="3.3" transform="rotate(65 514.9 414.2)" fill="#bcdcaa"/>
<ellipse cx="515.7" cy="416.2" rx="4.5" ry="2.4" transform="rotate(50 515.7 416.2)" fill="#c8e1b8"/>
<ellipse cx="502.1" cy="405.7" rx="5.3" ry="1.7" transform="rotate(149 502.1 405.7)" fill="#c8e1b8"/>
<ellipse cx="509.8" cy="398.6" rx="3.4" ry="2.3" transform="rotate(77 509.8 398.6)" fill="#acd497"/>
<ellipse cx="484.7" cy="389.7" rx="5.3" ry="2.4" transform="rotate(125 484.7 389.7)" fill="#c8e1b8"/>
<ellipse cx="502.4" cy="409.7" rx="3.3" ry="3.8" transform="rotate(14 502.4 409.7)" fill="#c8e1b8"/>
<ellipse cx="498.1" cy="402.6" rx="4.3" ry="2.9" transform="rotate(98 498.1 402.6)" fill="#c8e1b8"/>
<ellipse cx="529.1" cy="410.4" rx="2.9" ry="1.8" transform="rotate(17 529.1 410.4)" fill="#acd497"/>
<ellipse cx="522.3" cy="419.1" rx="2.5" ry="2.9" transform="rotate(160 522.3 419.1)" fill="#c8e1b8"/>
<ellipse cx="513.7" cy="405.7" rx="2.4" ry="4.0" transform="rotate(53 513.7 405.7)" fill="#d3e6c6"/>
<ellipse cx="490.6" cy="397.9" rx="3.5" ry="2.1" transform="rotate(42 490.6 397.9)" fill="#bcdcaa"/>
<ellipse cx="511.8" cy="414.1" rx="3.4" ry="4.5" transform="rotate(91 511.8 414.1)" fill="#c8e1b8"/>
<ellipse cx="510.0" cy="410.7" rx="2.1" ry="1.5" transform="rotate(159 510.0 410.7)" fill="#c8e1b8"/>
<ellipse cx="514.7" cy="413.8" rx="3.0" ry="1.9" transform="rotate(34 514.7 413.8)" fill="#d3e6c6"/>
<ellipse cx="492.6" cy="394.2" rx="2.6" ry="3.3" transform="rotate(139 492.6 394.2)" fill="#c8e1b8"/>
<ellipse cx="498.6" cy="432.6" rx="3.0" ry="2.9" transform="rotate(25 498.6 432.6)" fill="#c8e1b8"/>
<ellipse cx="547.8" cy="493.9" rx="5.7" ry="4.3" transform="rotate(147 547.8 493.9)" fill="#acd497"/>
<ellipse cx="528.8" cy="476.0" rx="3.0" ry="4.3" transform="rotate(99 528.8 476.0)" fill="#c8e1b8"/>
<ellipse cx="518.4" cy="448.3" rx="2.8" ry="3.4" transform="rotate(118 518.4 448.3)" fill="#acd497"/>
<ellipse cx="524.4" cy="475.3" rx="3.4" ry="4.8" transform="rotate(56 524.4 475.3)" fill="#d3e6c6"/>
<ellipse cx="534.5" cy="485.3" rx="5.2" ry="4.3" transform="rotate(116 534.5 485.3)" fill="#acd497"/>
<ellipse cx="529.3" cy="475.7" rx="5.7" ry="3.0" transform="rotate(148 529.3 475.7)" fill="#acd497"/>
<ellipse cx="517.5" cy="472.2" rx="2.7" ry="1.8" transform="rotate(26 517.5 472.2)" fill="#acd497"/>
<ellipse cx="500.1" cy="432.2" rx="4.1" ry="2.1" transform="rotate(51 500.1 432.2)" fill="#d3e6c6"/>
<ellipse cx="511.3" cy="442.6" rx="5.1" ry="4.3" transform="rotate(145 511.3 442.6)" fill="#bcdcaa"/>
<ellipse cx="517.7" cy="433.1" rx="4.1" ry="1.8" transform="rotate(167 517.7 433.1)" fill="#acd497"/>
<ellipse cx="501.7" cy="428.0" rx="5.6" ry="3.8" transform="rotate(154 501.7 428.0)" fill="#d3e6c6"/>
<ellipse cx="521.5" cy="447.4" rx="2.9" ry="2.4" transform="rotate(72 521.5 447.4)" fill="#d3e6c6"/>
<ellipse cx="504.5" cy="441.9" rx="5.9" ry="4.3" transform="rotate(35 504.5 441.9)" fill="#d3e6c6"/>
<ellipse cx="530.3" cy="475.7" rx="3.4" ry="2.9" transform="rotate(82 530.3 475.7)" fill="#bcdcaa"/>
<ellipse cx="524.6" cy="473.7" rx="3.7" ry="2.9" transform="rotate(91 524.6 473.7)" fill="#c8e1b8"/>
<ellipse cx="496.7" cy="427.5" rx="3.1" ry="4.2" transform="rotate(140 496.7 427.5)" fill="#acd497"/>
<ellipse cx="535.3" cy="477.2" rx="2.5" ry="2.8" transform="rotate(66 535.3 477.2)" fill="#acd497"/>
<ellipse cx="519.4" cy="460.1" rx="2.7" ry="4.7" transform="rotate(56 519.4 460.1)" fill="#d3e6c6"/>
<ellipse cx="503.3" cy="424.5" rx="4.7" ry="4.2" transform="rotate(5 503.3 424.5)" fill="#c8e1b8"/>
<ellipse cx="538.8" cy="482.7" rx="2.9" ry="4.9" transform="rotate(89 538.8 482.7)" fill="#c8e1b8"/>
<ellipse cx="526.8" cy="469.1" rx="5.4" ry="3.7" transform="rotate(45 526.8 469.1)" fill="#bcdcaa"/>
<ellipse cx="491.2" cy="495.0" rx="2.3" ry="2.7" transform="rotate(166 491.2 495.0)" fill="#c8e1b8"/>
<ellipse cx="482.6" cy="472.9" rx="3.0" ry="1.9" transform="rotate(73 482.6 472.9)" fill="#bcdcaa"/>
<ellipse cx="488.9" cy="477.0" rx="4.3" ry="1.7" transform="rotate(96 488.9 477.0)" fill="#bcdcaa"/>
<ellipse cx="489.4" cy="492.0" rx="4.0" ry="3.8" transform="rotate(45 489.4 492.0)" fill="#d3e6c6"/>
<ellipse cx="480.0" cy="480.9" rx="2.6" ry="4.0" transform="rotate(104 480.0 480.9)" fill="#bcdcaa"/>
<ellipse cx="480.8" cy="465.3" rx="3.7" ry="3.9" transform="rotate(53 480.8 465.3)" fill="#d3e6c6"/>
<ellipse cx="468.9" cy="451.7" rx="3.6" ry="3.1" transform="rotate(56 468.9 451.7)" fill="#c8e1b8"/>
<ellipse cx="489.3" cy="484.7" rx="3.8" ry="2.5" transform="rotate(66 489.3 484.7)" fill="#c8e1b8"/>
<ellipse cx="474.1" cy="461.4" rx="1.9" ry="1.4" transform="rotate(64 474.1 461.4)" fill="#c8e1b8"/>
<ellipse cx="479.0" cy="471.1" rx="2.7" ry="1.7" transform="rotate(66 479.0 471.1)" fill="#acd497"/>
<ellipse cx="481.2" cy="457.3" rx="4.0" ry="2.6" transform="rotate(11 481.2 457.3)" fill="#c8e1b8"/>
<ellipse cx="492.6" cy="482.6" rx="2.6" ry="1.4" transform="rotate(116 492.6 482.6)" fill="#d3e6c6"/>
<ellipse cx="447.3" cy="487.0" rx="3.3" ry="2.4" transform="rotate(89 447.3 487.0)" fill="#c8e1b8"/>
<ellipse cx="455.9" cy="491.1" rx="2.7" ry="1.8" transform="rotate(11 455.9 491.1)" fill="#c8e1b8"/>
<ellipse cx="412.3" cy="467.6" rx="2.0" ry="1.7" transform="rotate(109 412.3 467.6)" fill="#d3e6c6"/>
<ellipse cx="438.4" cy="486.8" rx="3.0" ry="1.4" transform="rotate(113 438.4 486.8)" fill="#acd497"/>
<ellipse cx="452.0" cy="486.0" rx="3.7" ry="2.3" transform="rotate(134 452.0 486.0)" fill="#acd497"/>
<ellipse cx="428.9" cy="473.8" rx="3.4" ry="1.5" transform="rotate(160 428.9 473.8)" fill="#bcdcaa"/>
<ellipse cx="444.5" cy="490.2" rx="2.8" ry="3.1" transform="rotate(94 444.5 490.2)" fill="#bcdcaa"/>
<ellipse cx="437.2" cy="473.2" rx="1.8" ry="2.4" transform="rotate(31 437.2 473.2)" fill="#c8e1b8"/>
<ellipse cx="435.7" cy="374.1" rx="3.1" ry="1.2" transform="rotate(70 435.7 374.1)" fill="#d3e6c6"/>
<ellipse cx="420.4" cy="361.5" rx="2.7" ry="2.1" transform="rotate(176 420.4 361.5)" fill="#acd497"/>
<ellipse cx="423.9" cy="367.0" rx="1.3" ry="2.6" transform="rotate(42 423.9 367.0)" fill="#bcdcaa"/>
<ellipse cx="430.9" cy="374.1" rx="2.4" ry="1.2" transform="rotate(6 430.9 374.1)" fill="#c8e1b8"/>
<ellipse cx="415.4" cy="360.5" rx="1.5" ry="1.0" transform="rotate(7 415.4 360.5)" fill="#c8e1b8"/>
<ellipse cx="430.8" cy="369.5" rx="2.4" ry="1.6" transform="rotate(147 430.8 369.5)" fill="#d3e6c6"/>
</g>
<g fill="#ecefdc" opacity="0.9"><path d="M470 440 Q510 425 544 440 L544 492 L470 492Z"/><path d="M404 350 Q430 360 470 352 L470 380 Q440 385 404 375Z"/></g>
<g fill="none" stroke="#cdcac4" stroke-width="0.5"><path d="M499 324 Q482 328 459 335"/><path d="M214 369 Q210 365 199 377"/><path d="M471 426 Q491 435 494 433"/><path d="M213 398 Q227 404 241 400"/><path d="M426 378 Q402 379 401 381"/><path d="M385 358 Q389 366 391 385"/><path d="M421 409 Q421 419 402 418"/><path d="M199 354 Q192 361 183 368"/><path d="M332 422 Q343 433 365 443"/><path d="M474 359 Q490 385 501 393"/><path d="M335 369 Q354 364 368 378"/><path d="M455 425 Q449 445 463 449"/><path d="M164 477 Q169 494 176 486"/><path d="M336 406 Q345 422 367 434"/><path d="M442 448 Q448 466 458 478"/><path d="M479 431 Q485 445 511 450"/><path d="M369 371 Q356 380 342 382"/><path d="M253 451 Q274 464 289 470"/><path d="M264 426 Q275 450 274 443"/><path d="M431 330 Q439 349 473 344"/><path d="M459 444 Q468 450 482 460"/><path d="M214 408 Q219 406 219 423"/><path d="M336 441 Q344 444 362 454"/><path d="M436 475 Q433 483 430 503"/><path d="M223 454 Q204 456 192 481"/><path d="M411 427 Q417 437 427 451"/><path d="M303 462 Q295 485 288 495"/><path d="M317 440 Q314 450 303 463"/><path d="M400 452 Q402 465 401 479"/><path d="M354 376 Q332 379 316 383"/><path d="M367 429 Q359 438 366 465"/><path d="M345 411 Q360 418 379 437"/><path d="M445 334 Q460 356 465 374"/><path d="M294 356 Q296 364 301 383"/><path d="M238 385 Q216 388 202 392"/><path d="M461 383 Q473 376 481 391"/><path d="M392 419 Q409 428 416 440"/><path d="M394 467 Q394 494 398 506"/><path d="M180 469 Q168 481 157 481"/><path d="M233 413 Q243 408 254 413"/></g>
  <!-- thin grey roads (texture) -->
  <g fill="none" stroke="#c8c5bf" stroke-width="0.6">
    <path d="M128 400 Q180 390 230 397 Q270 402 300 412"/>
    <path d="M128 460 Q170 450 200 440 Q230 430 262 440"/>
    <path d="M150 470 Q180 480 210 492"/>
    <path d="M140 354 Q150 380 145 420 Q140 460 150 492"/>
    <path d="M175 354 Q185 390 200 420 Q215 445 245 460"/>
    <path d="M128 420 Q170 425 215 418"/>
    <path d="M128 440 Q160 445 190 470 Q200 480 230 480"/>
    <path d="M410 350 Q430 360 450 356 Q470 350 490 358"/>
    <path d="M420 380 Q440 400 460 440 Q470 470 480 492"/>
    <path d="M404 460 Q440 450 470 455 Q510 460 544 450"/>
    <path d="M450 312 Q455 340 440 370"/>
    <path d="M470 370 Q490 400 500 440 Q505 470 510 492"/>
    <path d="M400 480 Q430 470 460 480"/>
    <path d="M372 440 Q400 450 420 470 Q430 480 440 492"/>
  </g>
  <path d="M265 443 L267 462 M260 428 L260 436 M265 385 L270 391 M389 464 L405 466 M436 420 L430 434 M324 435 L337 438 M332 454 L333 461 M239 455 L234 467 M254 430 L262 440 M469 428 L458 442 M307 453 L317 455 M325 395 L331 412 M404 412 L409 416 M363 409 L369 428 M377 452 L388 465 M355 446 L340 460 M345 448 L352 449 M328 409 L330 423 M347 483 L343 490 M355 454 L361 461 M400 419 L390 422 M331 464 L323 480 M328 456 L337 471 M315 443 L313 450 M323 477 L324 489 M370 420 L357 425 M331 448 L315 459 M320 453 L304 456 M365 398 L376 402 M432 452 L426 459 M289 413 L284 420 M349 441 L337 447 M293 411 L308 423 M355 433 L367 435 M339 460 L352 466 M259 486 L249 504 M298 387 L306 388 M418 439 L402 440 M383 437 L375 446 M370 450 L355 455 M314 376 L298 380 M279 473 L262 480 M251 461 L247 478 M289 406 L284 419 M376 454 L358 461 M314 396 L310 411 M240 454 L235 459 M380 439 L390 447 M303 391 L289 395 M320 435 L314 444 M328 450 L319 467 M231 456 L226 466 M335 465 L319 470 M352 406 L360 418 M355 461 L339 469 M315 451 L323 460 M330 465 L331 480 M286 491 L289 511 M330 434 L348 436 M305 386 L297 392 M344 432 L356 433 M336 407 L344 409 M286 402 L279 415 M308 409 L319 415" fill="none" stroke="#f8f7f4" stroke-width="0.7"/>
<path d="M132 419 L150 430 M241 402 L240 422 M384 458 L372 467 M505 366 L490 384 M182 417 L164 422 M285 432 L266 446 M521 418 L536 429 M428 467 L416 482 M217 478 L192 480 M351 463 L338 467 M484 402 L486 411 M357 460 L373 461 M465 363 L483 374 M267 463 L277 467 M343 454 L330 472 M521 422 L545 428 M220 427 L212 436 M394 426 L390 448 M258 407 L236 413 M215 471 L213 496 M366 382 L366 399 M380 358 L379 382 M295 465 L295 482 M415 363 L420 380 M526 481 L527 494 M181 414 L160 421 M326 398 L322 408 M513 372 L534 373 M209 385 L219 402 M276 440 L269 447 M179 424 L189 432 M349 414 L352 428 M348 376 L344 387 M394 427 L386 448 M484 386 L467 398 M504 398 L491 401 M219 492 L240 501 M228 454 L239 458 M474 412 L494 420 M296 449 L302 453 M412 480 L435 488 M338 459 L329 472 M207 364 L216 365 M357 425 L373 433 M205 382 L182 383 M514 367 L505 369 M320 460 L322 473 M342 413 L361 414 M420 471 L421 481 M436 410 L445 416 M341 356 L322 370 M421 473 L427 491 M377 424 L357 438 M235 480 L220 493 M467 410 L445 419 M417 460 L423 480 M429 364 L430 377 M132 403 L125 421 M225 484 L234 501 M402 433 L408 449" fill="none" stroke="#c4c1bb" stroke-width="0.45"/>
<rect x="382" y="425" width="7" height="6" fill="#d3d1cd" opacity="0.8"/><rect x="334" y="424" width="7" height="6" fill="#d3d1cd" opacity="0.8"/><rect x="323" y="455" width="3" height="3" fill="#d3d1cd" opacity="0.8"/><rect x="312" y="435" width="5" height="7" fill="#d3d1cd" opacity="0.8"/><rect x="280" y="414" width="9" height="5" fill="#d3d1cd" opacity="0.8"/><rect x="382" y="424" width="8" height="2" fill="#d3d1cd" opacity="0.8"/><rect x="270" y="396" width="3" height="7" fill="#d3d1cd" opacity="0.8"/><rect x="349" y="454" width="4" height="4" fill="#d3d1cd" opacity="0.8"/><rect x="314" y="418" width="9" height="4" fill="#d3d1cd" opacity="0.8"/><rect x="272" y="418" width="5" height="3" fill="#d3d1cd" opacity="0.8"/><rect x="296" y="393" width="5" height="6" fill="#d3d1cd" opacity="0.8"/><rect x="323" y="430" width="4" height="2" fill="#d3d1cd" opacity="0.8"/><rect x="362" y="467" width="5" height="6" fill="#d3d1cd" opacity="0.8"/><rect x="325" y="415" width="9" height="7" fill="#d3d1cd" opacity="0.8"/><rect x="403" y="454" width="6" height="4" fill="#d3d1cd" opacity="0.8"/><rect x="354" y="421" width="6" height="7" fill="#d3d1cd" opacity="0.8"/><rect x="317" y="392" width="9" height="6" fill="#d3d1cd" opacity="0.8"/><rect x="309" y="416" width="7" height="4" fill="#d3d1cd" opacity="0.8"/><rect x="329" y="434" width="6" height="3" fill="#d3d1cd" opacity="0.8"/><rect x="269" y="441" width="6" height="3" fill="#d3d1cd" opacity="0.8"/><rect x="289" y="410" width="8" height="5" fill="#d3d1cd" opacity="0.8"/><rect x="424" y="424" width="7" height="3" fill="#d3d1cd" opacity="0.8"/><rect x="389" y="467" width="8" height="5" fill="#d3d1cd" opacity="0.8"/><rect x="305" y="443" width="7" height="5" fill="#d3d1cd" opacity="0.8"/><rect x="277" y="402" width="8" height="3" fill="#d3d1cd" opacity="0.8"/><rect x="326" y="509" width="8" height="6" fill="#d3d1cd" opacity="0.8"/><rect x="339" y="428" width="5" height="4" fill="#d3d1cd" opacity="0.8"/><rect x="312" y="415" width="6" height="2" fill="#d3d1cd" opacity="0.8"/><rect x="376" y="448" width="6" height="5" fill="#d3d1cd" opacity="0.8"/><rect x="293" y="449" width="4" height="4" fill="#d3d1cd" opacity="0.8"/><rect x="323" y="368" width="3" height="3" fill="#d3d1cd" opacity="0.8"/><rect x="345" y="386" width="8" height="3" fill="#d3d1cd" opacity="0.8"/><rect x="298" y="436" width="8" height="4" fill="#d3d1cd" opacity="0.8"/><rect x="257" y="351" width="5" height="5" fill="#d3d1cd" opacity="0.8"/><rect x="323" y="357" width="6" height="4" fill="#d3d1cd" opacity="0.8"/><rect x="392" y="460" width="3" height="2" fill="#d3d1cd" opacity="0.8"/><rect x="283" y="411" width="7" height="3" fill="#d3d1cd" opacity="0.8"/><rect x="328" y="413" width="4" height="5" fill="#d3d1cd" opacity="0.8"/><rect x="355" y="438" width="7" height="5" fill="#d3d1cd" opacity="0.8"/><rect x="320" y="441" width="5" height="6" fill="#d3d1cd" opacity="0.8"/>
  <!-- railways -->
  <g fill="none" stroke="#8d8d8d" stroke-width="0.9">
    <path d="M300 428 Q330 418 360 408 Q400 396 440 385 L480 372"/>
    <path d="M304 380 Q307 400 310 428"/>
  </g>
  <!-- yellow roads -->
  <g fill="none" stroke="#f2e17a" stroke-width="1.2" stroke-linecap="round">
    <path d="M300 372 L320 392 L330 420 L336 450"/>
    <path d="M280 394 Q310 396 350 385"/>
    <path d="M288 408 Q320 412 356 402"/>
    <path d="M320 440 L345 470 L360 492"/>
    <path d="M300 450 Q318 456 340 452"/>
    <path d="M318 430 L300 470 L292 492"/>
    <path d="M270 372 L290 400"/>
    <path d="M340 372 L350 400 L364 428"/>
  </g>
  <!-- orange roads -->
  <g fill="none" stroke="#f1c490" stroke-linecap="round">
    <path d="M128 362 L182 363 Q195 366 210 374 L226 382" stroke-width="1.8"/>
    <path d="M284 428 Q324 426 364 430 Q366 455 362 470 Q340 480 300 478 Q286 476 284 460 Z" stroke-width="2"/>
    <path d="M364 432 Q450 428 544 419" stroke-width="2.2"/>
    <path d="M371 380 Q374 405 366 430" stroke-width="1.8"/>
    <path d="M398 312 Q400 350 390 372 L371 380" stroke-width="1.6"/>
    <path d="M284 470 Q270 480 262 492" stroke-width="1.6"/>
    <path d="M200 487 Q240 482 268 481" stroke-width="1.6"/>
    <path d="M405 312 Q408 330 404 345" stroke="#e8b0a8" stroke-width="1.6"/>
  </g>
  <path d="M222 430 Q216 455 210 470 Q206 482 205 492" fill="none" stroke="#e0897e" stroke-width="2.2"/><path d="M219 354 L222 364" fill="none" stroke="#e0897e" stroke-width="2"/>
  <path d="M405 313.2 L452 313.2" fill="none" stroke="#d8808c" stroke-width="2"/>
  <!-- top tint band under overlay -->
  <rect x="128" y="354" width="270" height="9" fill="#c9d3ea" opacity="0.45"/>
  <!-- labels -->
  <g font-family="Liberation Sans" font-size="4.8" fill="#555">
    <text x="165" y="365">Swilcza</text>
    <text x="138" y="431">Bzianka</text>
    <text x="140" y="439" fill="#999" font-size="3.6">Rudna</text>
    <text x="131" y="468">Nosówka</text>
    <text x="200" y="472">Kielanówka</text>
    <text x="256" y="460">Staroniwa</text>
    <text x="276" y="440">Kmiy</text>
    <text x="290" y="462">Grota-Roweckiego</text>
    <text x="277" y="472">Dąbrowskiego</text>
    <text x="264" y="487">Zawiszy Czarnego</text>
    <text x="329" y="472">Paderewskiego</text>
    <text x="303" y="375">Staromieście</text>
    <text x="284" y="391">Pobitno</text>
    <text x="316" y="420">1000-lecia</text>
    <text x="356" y="423">Pobitno</text>
    <text x="379" y="434">Wilkowyja</text>
    <text x="372" y="393">Zalęże</text>
    <text x="443" y="415">Krasne</text>
    <text x="461" y="461">Malawa</text>
    <text x="392" y="476">Słocina</text>
    <text x="312" y="443" font-size="5.2" fill="#444">Rzeszów</text>
    <text x="448" y="331">Łąka</text>
    <text x="343" y="449" font-size="3.6">Mieszko</text>
    <text x="286" y="359" font-size="3.8">Nowsza</text>
  </g>
  <path d="M340.7 436.4 L364.6 439 L366 449.7 L342.6 460.3 Z" fill="#2d8a7a" fill-opacity="0.3" stroke="#1f7a68" stroke-width="1"/>
  <path d="M308 424 L317 426 L314 431 Z" fill="#1f8a6a"/>
  <!-- markers -->
  <path d="M251 431 Q245 431 245 437.5 Q245 442 251 450.5 Q257 442 257 437.5 Q257 431 251 431Z" fill="#2b7fd4"/>
  <circle cx="251" cy="437" r="1.6" fill="#fff"/>
  <path d="M318 430 Q312 430 312 436.5 Q312 441 318 449 Q324 441 324 436.5 Q324 430 318 430Z" fill="#2b7fd4"/>
  <circle cx="318" cy="436" r="1.6" fill="#fff"/>
</svg>
</div>
<div class="a" style="left:536px;top:488px;width:8px;height:4px;background:#000"></div>
<!-- legend -->
<div class="a" style="left:475px;top:312px;width:60px;height:66px;background:rgba(244,246,251,0.92);border-radius:0 0 6px 6px"></div>
<div class="t" style="left:483px;top:319.18px;font-size:7.5px;color:#555;font-weight:bold">Typ</div>
<div class="a" style="left:482.4px;top:332px;width:8px;height:8px;background:#c8142e;border-radius:1px"></div>
<div class="a" style="left:482.4px;top:346.8px;width:8px;height:8px;background:#33b1da;border-radius:1px"></div>
<div class="a" style="left:482.4px;top:360.2px;width:8px;height:8px;background:#0e7676;border-radius:1px"></div>
<svg class="a" style="left:482.4px;top:332px" width="8" height="37" viewBox="0 0 8 37"><g fill="none" stroke="#fff" stroke-width="0.9"><path d="M2 4.2 L3.4 5.6 L6 2.6"/><path d="M2 19 L3.4 20.4 L6 17.4"/><path d="M2 32.4 L3.4 33.8 L6 30.8"/></g></svg>
<div class="t" style="left:494.5px;top:332.91px;font-size:8.35px;color:#5b6172">Budynek</div>
<div class="t" style="left:494.5px;top:347.11px;font-size:8.35px;color:#5b6172">Budowla</div>
<div class="t" style="left:494.5px;top:360.91px;font-size:8.35px;color:#5b6172">Grunt</div>
<!-- popup -->
<div class="a" style="left:206px;top:361.6px;width:90.5px;height:66.5px;background:#fff;border-radius:3px;box-shadow:0 1px 4px rgba(0,0,0,0.2)"></div>
<div class="a" style="left:247px;top:424px;width:8px;height:8px;background:#fff;transform:rotate(45deg)"></div>
<div class="t" style="left:215px;top:372.50px;font-size:10px;color:#222">Budynek G</div>
<svg class="a" style="left:285px;top:367px" width="6" height="6" viewBox="0 0 6 6"><path d="M1 1 L5 5 M5 1 L1 5" stroke="#777" stroke-width="0.8"/></svg>
<div class="a" style="left:215px;top:403px;width:45px;height:17px;background:#fff;border:0.6px solid #e8eaee;border-radius:2px"></div>
<div class="t" style="-webkit-text-stroke:0.15px #1a72b0;left:223px;top:408.09px;font-size:6.2px;color:#1a72b0">Szczegóły</div>


<!-- overlay panel -->

<div class="a" style="left:30px;top:266px;width:365.5px;height:87.5px;background:rgba(248,249,252,0.97);border-radius:10px;box-shadow:0 1px 5px rgba(30,40,90,0.15)"></div>
<div class="a" style="left:35.5px;top:270px;width:171.9px;height:77.6px;border-radius:7px;background:linear-gradient(178deg,#eafaee 0%,#e4f3f0 30%,#d6e3f6 68%,#c8d7f6 100%)"></div>
<svg class="a" style="left:52px;top:289px" width="26" height="22" viewBox="0 0 26 22"><path d="M2 4.2 Q2 2.2 4 2.2 L8.6 2.2 L11 5 L21.8 5 Q23.8 5 23.8 7 L23.8 17.8 Q23.8 19.8 21.8 19.8 L4 19.8 Q2 19.8 2 17.8 Z" fill="none" stroke="#5c6470" stroke-width="1.7" stroke-linejoin="round"/></svg>
<div class="t" style="left:51.5px;top:321.07px;font-size:10.42px;color:#5b6577">Dokumenty pracownicze</div>
<div class="a" style="left:221px;top:272.2px;width:171.4px;height:75.7px;border-radius:7px;background:linear-gradient(100deg,#ffb2b6 0%,#ffc4cb 50%,#ffd7e3 100%)"></div>
<svg class="a" style="left:236px;top:289px" width="26" height="22" viewBox="0 0 26 22"><path d="M2 4.2 Q2 2.2 4 2.2 L8.6 2.2 L11 5 L21.8 5 Q23.8 5 23.8 7 L23.8 17.8 Q23.8 19.8 21.8 19.8 L4 19.8 Q2 19.8 2 17.8 Z" fill="none" stroke="#5c6470" stroke-width="1.7" stroke-linejoin="round"/></svg>
<div class="t" style="left:236px;top:321.12px;font-size:10.32px;color:#5b6577">Materiały marketingowe</div>


</div>
</body></html>
